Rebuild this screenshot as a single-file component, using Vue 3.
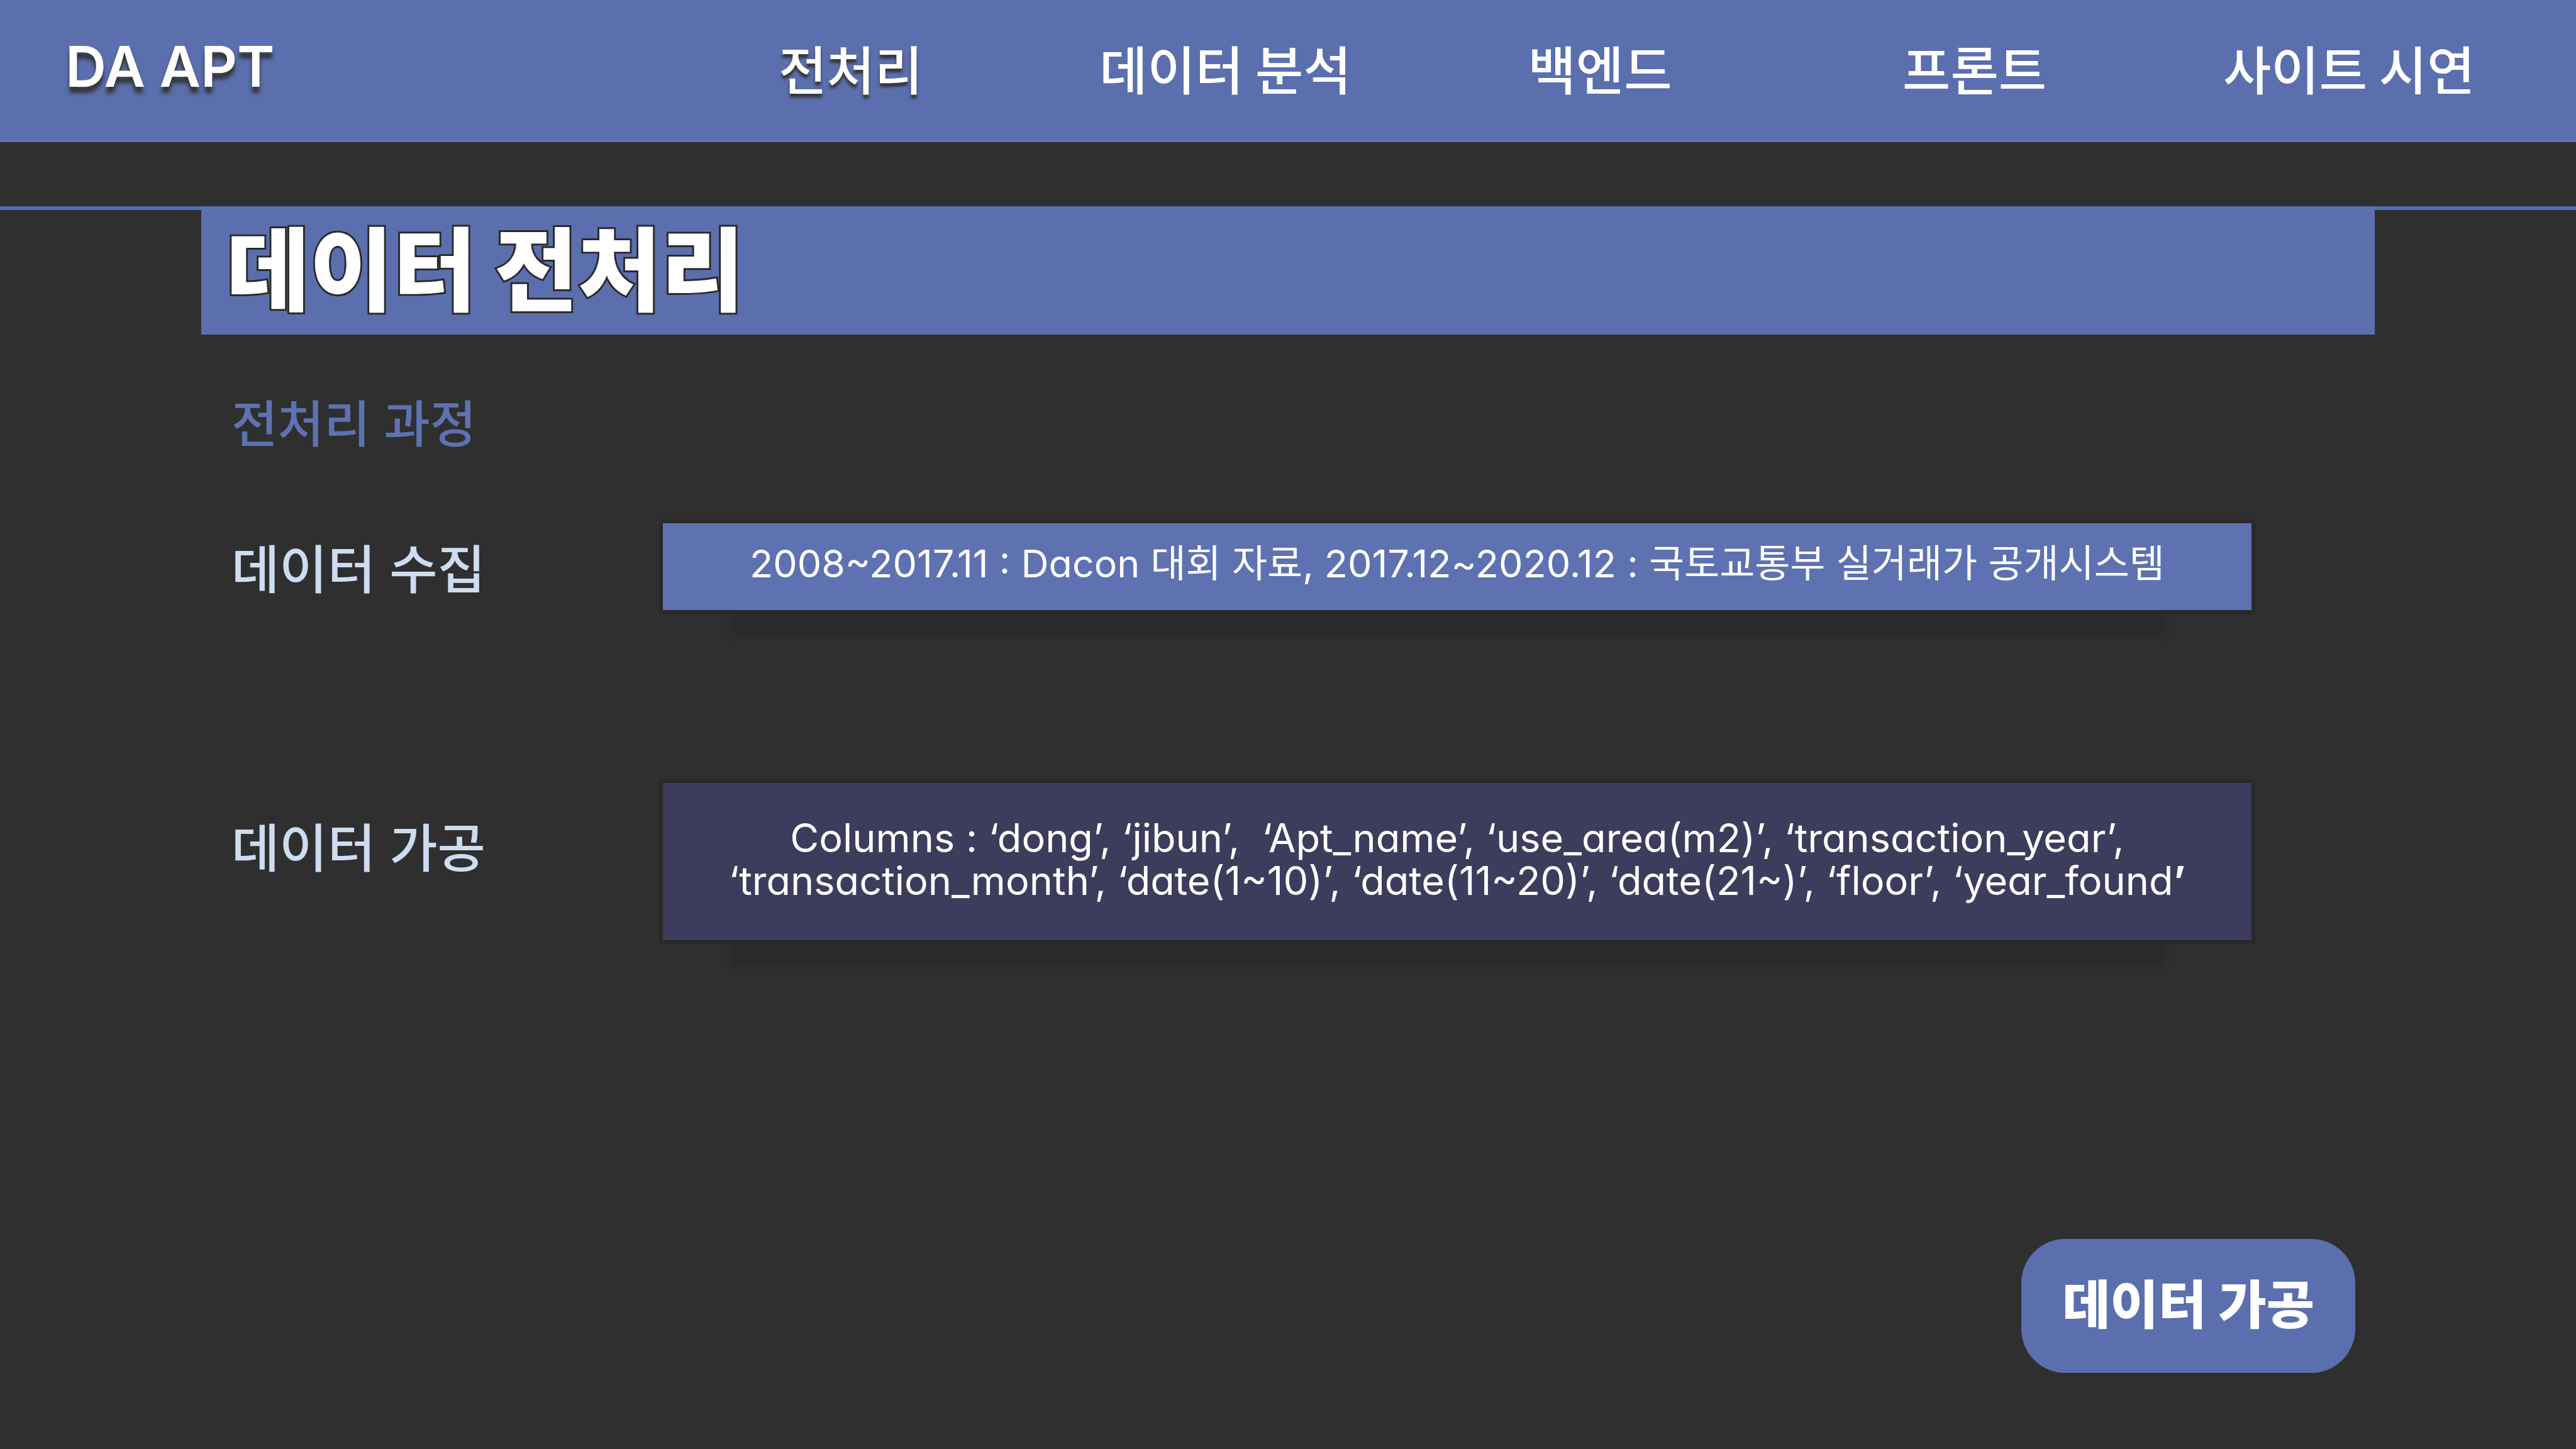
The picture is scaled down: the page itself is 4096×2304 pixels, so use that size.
<script setup>
const menu = [
  { label: '전처리', active: true },
  { label: '데이터 분석', active: false },
  { label: '백엔드', active: false },
  { label: '프론트', active: false },
  { label: '사이트 시연', active: false },
]
</script>

<template>
  <div class="page">
    <header class="topbar">
      <a class="brand" href="#">DA APT</a>
      <nav class="menu">
        <a
          v-for="item in menu"
          :key="item.label"
          href="#"
          class="menu-link"
          :class="{ active: item.active }"
        >{{ item.label }}</a>
      </nav>
    </header>

    <main class="content">
      <div class="title-band">
        <h1 class="title">데이터 전처리</h1>
      </div>

      <section class="steps">
        <h2 class="subtitle">전처리 과정</h2>

        <div class="step">
          <h3 class="step-name">데이터 수집</h3>
          <div class="card">
            <p class="card-text blue">2008~2017.11 : Dacon 대회 자료, 2017.12~2020.12 : 국토교통부 실거래가 공개시스템</p>
          </div>
        </div>

        <div class="step">
          <h3 class="step-name">데이터 가공</h3>
          <div class="card">
            <p class="card-text violet">
              Columns : ‘dong’, ‘jibun’,&nbsp; ‘Apt_name’, ‘use_area(m2)’, ‘transaction_year’,<br>
              ‘transaction_month’, ‘date(1~10)’, ‘date(11~20)’, ‘date(21~)’, ‘floor’, ‘year_found<b>’</b>
            </p>
          </div>
        </div>
      </section>

      <button type="button" class="next">데이터 가공</button>
    </main>
  </div>
</template>

<style>
body {
  margin: 0;
  background: #2f2f2f;
}
</style>

<style scoped>
.page {
  display: flex;
  flex-direction: column;
  min-height: 100vh;
  background: #2f2f2f;
  color: #fff;
  font-family: Inter, "Noto Sans CJK KR", sans-serif;
  font-feature-settings: "cv11";
}

.topbar {
  display: grid;
  grid-template-columns: 1055fr 2978fr;
  align-items: center;
  height: 226px;
  padding-right: 63px;
  background: #5b6fae;
}

.brand {
  padding: 0 0 14px 104px;
  color: #fff;
  font-size: 90px;
  font-weight: 600;
  line-height: 112px;
  text-decoration: none;
  white-space: nowrap;
  text-shadow: 0 10px 6px #333;
}

.menu {
  display: grid;
  grid-template-columns: repeat(5, 1fr);
  padding-bottom: 12px;
}

.menu-link {
  color: #fff;
  font-family: "Noto Sans CJK KR", sans-serif;
  font-size: 83px;
  font-weight: 500;
  line-height: 112px;
  text-align: center;
  text-decoration: none;
  white-space: nowrap;
}

.menu-link.active {
  text-shadow: 0 6px 4px #333;
}

.content {
  display: flex;
  flex: 1;
  flex-direction: column;
  margin-top: 102px;
  padding: 0 320px 121px;
  background: linear-gradient(#5170b3, #5170b3) top / 100% 6px no-repeat;
}

.title-band {
  padding: 2px 40px 0;
  background: #5b6fae;
}

.title {
  margin: 0;
  font-size: 144px;
  font-weight: 900;
  line-height: 202px;
  -webkit-text-stroke: 6px #2b2b2b;
  paint-order: stroke fill;
}

.steps {
  padding: 86px 0 0 48px;
}

.subtitle {
  margin: 0 0 96px;
  color: #5e72b1;
  font-size: 80px;
  font-weight: 500;
  line-height: 112px;
}

.step {
  display: grid;
  grid-template-columns: 680px 1fr;
  margin-right: 190px;
}

.step + .step {
  margin-top: 263px;
}

.step-name {
  margin: 0;
  padding-top: 24px;
  color: #cddcf0;
  font-size: 83px;
  font-weight: 500;
  line-height: 112px;
}

.step + .step .step-name {
  padding-top: 54px;
}

.card {
  position: relative;
  isolation: isolate;
}

/* offset shade below the card */
.card::after {
  content: "";
  position: absolute;
  z-index: -1;
  right: 143px;
  bottom: -36px;
  left: 113px;
  height: 80px;
  background: #292b2a;
  filter: blur(4px);
}

.card-text {
  margin: 0;
  border: 6px solid #292929;
  border-radius: 3px;
  text-align: center;
  white-space: nowrap;
}

.blue {
  padding: 24px 0 34px;
  background: #5e72b1;
  font-size: 61px;
  line-height: 80px;
}

.violet {
  padding: 53px 0 61px;
  background: #3d3c5c;
  font-size: 63px;
  line-height: 68px;
}

.next {
  align-self: flex-end;
  margin: auto 31px 0 0;
  padding: 43px 65px 58px;
  border: 0;
  border-radius: 70px;
  background: #5b6fae;
  color: #fff;
  font-family: "Noto Sans CJK KR", sans-serif;
  font-size: 83px;
  font-weight: 900;
  line-height: 112px;
}
</style>
